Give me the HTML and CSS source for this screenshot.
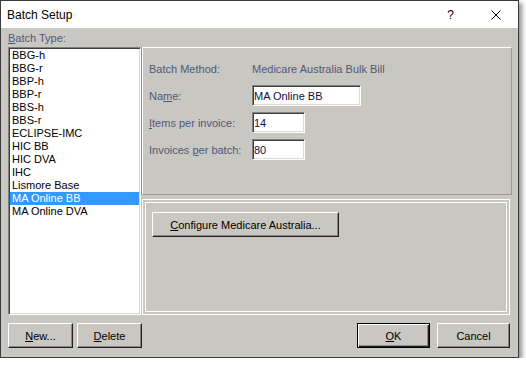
FILE: index.html
```html
<!DOCTYPE html>
<html lang="en">

<head>
    <meta charset="UTF-8">
    <meta name="viewport" content="width=device-width, initial-scale=1.0">
    <title>Batch Setup</title>
    <link rel="stylesheet" href="styles.css">
</head>

<body>
    <div class="window">
        <div class="titlebar">
            <span class="title">Batch Setup</span>
            <span class="help">?</span>
            <svg class="close" width="10" height="10" viewBox="0 0 10 10">
                <path d="M0.5 0.5 L9.5 9.5 M9.5 0.5 L0.5 9.5" stroke="#000" stroke-width="1" fill="none" />
            </svg>
        </div>

        <div class="dialog-body">
            <div class="main">
                <div class="type-col">
                    <div class="type-label"><u>B</u>atch Type:</div>
                    <ul class="type-list">
                        <li>BBG-h</li>
                        <li>BBG-r</li>
                        <li>BBP-h</li>
                        <li>BBP-r</li>
                        <li>BBS-h</li>
                        <li>BBS-r</li>
                        <li>ECLIPSE-IMC</li>
                        <li>HIC BB</li>
                        <li>HIC DVA</li>
                        <li>IHC</li>
                        <li>Lismore Base</li>
                        <li class="selected">MA Online BB</li>
                        <li>MA Online DVA</li>
                    </ul>
                </div>

                <div class="detail-col">
                    <div class="method-panel">
                        <div class="fields">
                            <span class="field-label">Batch Method:</span>
                            <span class="field-value">Medicare Australia Bulk Bill</span>

                            <label class="field-label">Na<u>m</u>e:</label>
                            <input class="field-input input-wide" type="text" value="MA Online BB">

                            <label class="field-label"><u>I</u>tems per invoice:</label>
                            <input class="field-input" type="text" value="14">

                            <label class="field-label">Invoices <u>p</u>er batch:</label>
                            <input class="field-input" type="text" value="80">
                        </div>
                    </div>

                    <div class="config-panel">
                        <button class="btn btn-config"><u>C</u>onfigure Medicare Australia...</button>
                    </div>
                </div>
            </div>

            <div class="actions">
                <div class="action-group">
                    <button class="btn btn-small"><u>N</u>ew...</button>
                    <button class="btn btn-small"><u>D</u>elete</button>
                </div>
                <div class="action-group action-group-right">
                    <button class="btn btn-wide btn-default"><u>O</u>K</button>
                    <button class="btn btn-wide">Cancel</button>
                </div>
            </div>
        </div>
    </div>
</body>

</html>
```

FILE: styles.css
```css
* {
    margin: 0;
    padding: 0;
    box-sizing: border-box;
}

body {
    background: #ffffff;
    font-family: "Liberation Sans", Arial, sans-serif;
    font-size: 11px;
    color: #000;
}

u {
    text-decoration: underline;
    text-underline-offset: 1px;
}

/* Window frame */
.window {
    width: 519px;
    height: 358px;
    border: 1px solid #3c3c3c;
    background: #c9c7c1;
    box-shadow: 3px 3px 5px rgba(0, 0, 0, 0.45);
    display: flex;
    flex-direction: column;
}

.titlebar {
    height: 27px;
    background: #ffffff;
    display: flex;
    align-items: center;
    padding-left: 6px;
    flex-shrink: 0;
}

.title {
    flex: 1;
    font-size: 12px;
    padding-top: 1px;
}

.help {
    font-size: 12px;
    margin-right: 37px;
    padding-top: 1px;
}

.close {
    margin-right: 17px;
}

/* Dialog body */
.dialog-body {
    flex: 1;
    padding: 0 6px 9px 7px;
    display: flex;
    flex-direction: column;
}

.main {
    display: flex;
    gap: 1px;
    height: 287px;
}

.type-col {
    width: 133px;
    display: flex;
    flex-direction: column;
}

.type-label {
    height: 19px;
    line-height: 13px;
    padding-top: 4px;
    color: #4f5a78;
}

.type-list {
    list-style: none;
    flex: 1;
    background: #ffffff;
    border-style: solid;
    border-width: 1px;
    border-color: #808080 #ffffff #ffffff #808080;
    box-shadow: inset 1px 1px 0 #404040, inset -1px -1px 0 #dcdad4;
    padding: 1px;
}

.type-list li {
    height: 13px;
    line-height: 13px;
    padding-left: 2px;
    white-space: nowrap;
}

.type-list li.selected {
    background: #3399ff;
    color: #ffffff;
}

/* Right column */
.detail-col {
    flex: 1;
    padding-top: 19px;
    display: flex;
    flex-direction: column;
    gap: 4px;
}

.method-panel {
    height: 148px;
    border: 1px solid;
    border-color: #ffffff #9c9a95 #9c9a95 #ffffff;
    box-shadow: -1px 0 0 #8a8884;
    padding: 11px 0 0 6px;
}

.fields {
    display: grid;
    grid-template-columns: 103px auto;
    grid-template-rows: 20px 21px 21px 21px;
    row-gap: 6px;
    align-items: center;
    color: #4f5a78;
}

.field-input {
    width: 53px;
    height: 21px;
    font-family: "Liberation Sans", Arial, sans-serif;
    font-size: 11px;
    color: #101040;
    background: #ffffff;
    padding: 0 1px;
    border-style: solid;
    border-width: 1px;
    border-color: #808080 #ffffff #ffffff #808080;
    box-shadow: inset 1px 1px 0 #404040, inset -1px -1px 0 #dcdad4;
    outline: none;
}

.input-wide {
    width: 109px;
}

.config-panel {
    flex: 1;
    margin-right: 2px;
    border: 1px solid #ffffff;
    box-shadow: inset 0 0 0 2px #c9c7c1, inset 0 0 0 3px #ffffff;
    padding: 12px 0 0 9px;
}

/* Buttons */
.btn {
    display: inline-block;
    height: 25px;
    font-family: "Liberation Sans", Arial, sans-serif;
    font-size: 11px;
    color: #000;
    background: #c9c7c1;
    border-style: solid;
    border-width: 1px;
    border-color: #ffffff #202020 #202020 #ffffff;
    box-shadow: inset -1px -1px 0 #8a8884;
    cursor: pointer;
}

.btn-config {
    width: 187px;
}

.btn-small {
    width: 65px;
}

.btn-wide {
    width: 73px;
}

.btn-default {
    border-color: #000;
    box-shadow: inset 1px 1px 0 #ffffff, inset -1px -1px 0 #202020, inset -2px -2px 0 #8a8884;
}

.actions {
    margin-top: 8px;
    margin-right: 2px;
    display: flex;
    justify-content: space-between;
}

.action-group {
    display: flex;
    gap: 4px;
}

.action-group-right {
    gap: 7px;
}
```
